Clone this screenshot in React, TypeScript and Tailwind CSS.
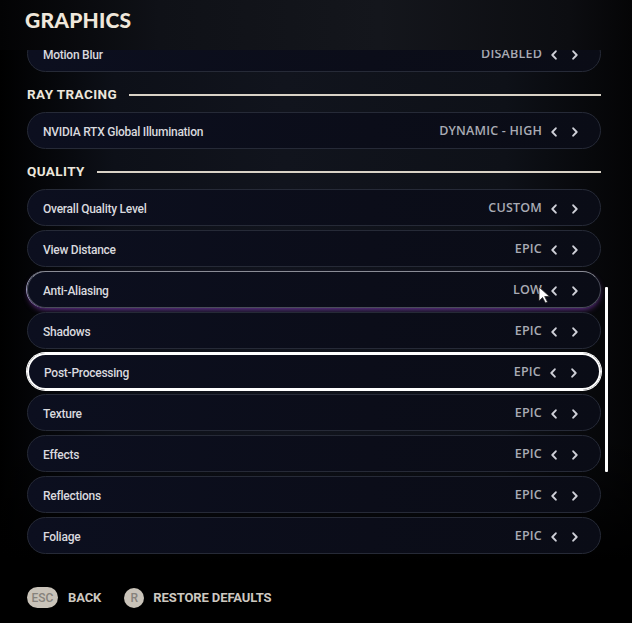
import React from "react";

const Chev = ({ dir }: { dir: "l" | "r" }) => (
  <svg width="6" height="10" viewBox="0 0 6 10" className="shrink-0">
    <path
      d={dir === "l" ? "M4.8 1.3 L1.3 5 L4.8 8.7" : "M1.2 1.3 L4.7 5 L1.2 8.7"}
      stroke="#cfd0d8"
      strokeWidth="1.9"
      fill="none"
      strokeLinecap="round"
      strokeLinejoin="round"
    />
  </svg>
);

type RowProps = { label: string; value: string; selected?: boolean; hover?: boolean };

const Row = ({ label, value, selected, hover }: RowProps) => {
  let cls =
    "relative h-[37px] shrink-0 rounded-full flex items-center pt-[2px] pl-[15px] pr-[22px] bg-[linear-gradient(to_right,#0c0f1f,#0b0d19_60%,#0a0c16)] ";
  if (selected) cls += "border-2 border-white shadow-[0_0_0_1px_#ffffff]";
  else if (hover)
    cls +=
      "border border-[#4a4d5a] border-t-[#8a8c96] shadow-[0_3px_6px_-2px_rgba(150,70,210,0.75),-1px_0_0_0_#9aa3b5]";
  else cls += "border border-[#262a37]";
  return (
    <div className={cls}>
      <span className="text-[12px] font-medium text-[#d9d9de] tracking-[-0.25px] font-['Roboto',sans-serif]">
        {label}
      </span>
      <span className="ml-auto text-[12.5px] font-semibold text-[#a9abb4] tracking-[0.2px] font-['Open_Sans',sans-serif]">
        {value}
      </span>
      <span className="ml-[9px] flex">
        <Chev dir="l" />
      </span>
      <span className="ml-[15px] flex">
        <Chev dir="r" />
      </span>
    </div>
  );
};

const Heading = ({ title }: { title: string }) => (
  <div className="h-[32px] shrink-0 pt-[10px] flex items-start">
    <div className="flex items-center w-full h-[17px]">
      <span className="text-[13.5px] font-bold text-[#ece6dc] tracking-[0.4px] font-['Roboto',sans-serif] leading-none">
        {title}
      </span>
      <div className="ml-[12px] flex-1 h-[2px] bg-[#d9d2c6]" />
    </div>
  </div>
);

export default function App() {
  return (
    <div className="relative w-[632px] h-[623px] overflow-hidden bg-black flex flex-col bg-[linear-gradient(to_bottom,transparent_70%,#000_90%),linear-gradient(to_right,#000_0%,#0d1018_18%,#11141d_45%,#0e1118_80%,#040405_100%)]">
      {/* header */}
      <div className="relative z-10 h-[50px] shrink-0 pl-[25px] pt-[8px] bg-[linear-gradient(to_right,#030304_0%,#0f1117_25%,#14161c_60%,#0c0d11_90%,#050506_100%)]">
        <h1 className="text-[21px] leading-[24px] font-black text-[#efe7db] tracking-[0.2px] font-['Lato',sans-serif]">
          GRAPHICS
        </h1>
      </div>

      {/* list */}
      <div className="relative h-[504px] shrink-0 overflow-hidden">
        <div className="flex flex-col gap-[4px] mt-[-15px] ml-[27px] w-[574px]">
          <Row label="Motion Blur" value="DISABLED" />
          <Heading title="RAY TRACING" />
          <Row label="NVIDIA RTX Global Illumination" value="DYNAMIC - HIGH" />
          <Heading title="QUALITY" />
          <Row label="Overall Quality Level" value="CUSTOM" />
          <Row label="View Distance" value="EPIC" />
          <Row label="Anti-Aliasing" value="LOW" hover />
          <Row label="Shadows" value="EPIC" />
          <Row label="Post-Processing" value="EPIC" selected />
          <Row label="Texture" value="EPIC" />
          <Row label="Effects" value="EPIC" />
          <Row label="Reflections" value="EPIC" />
          <Row label="Foliage" value="EPIC" />
        </div>
        {/* scrollbar */}
        <div className="absolute left-[605px] top-[237px] w-[3px] h-[185px] bg-white rounded-[1px]" />
        {/* cursor */}
        <svg
          className="absolute left-[538px] top-[236px]"
          width="14"
          height="18"
          viewBox="0 0 14 18"
        >
          <path
            d="M1 1 L1 15 L4.5 11.5 L7.5 17 L9.5 16 L6.7 10.5 L11.5 10.5 Z"
            fill="#ffffff"
            stroke="#2a2a2a"
            strokeWidth="0.8"
            strokeLinejoin="round"
          />
        </svg>
      </div>

      {/* footer */}
      <div className="flex items-center pl-[27px] pt-[33px] font-['Roboto',sans-serif]">
        <div className="h-[21px] w-[31px] rounded-full bg-[#c9c3b9] flex items-center justify-center text-[12px] font-medium text-[#86827c]">
          ESC
        </div>
        <span className="ml-[10px] text-[13px] font-bold text-[#cdc8c0] tracking-[-0.1px]">BACK</span>
        <div className="ml-[23px] h-[20px] w-[20px] rounded-full bg-[#c9c3b9] flex items-center justify-center text-[12px] font-medium text-[#86827c]">
          R
        </div>
        <span className="ml-[9px] text-[13px] font-bold text-[#cdc8c0] tracking-[-0.1px]">
          RESTORE DEFAULTS
        </span>
      </div>
    </div>
  );
}
